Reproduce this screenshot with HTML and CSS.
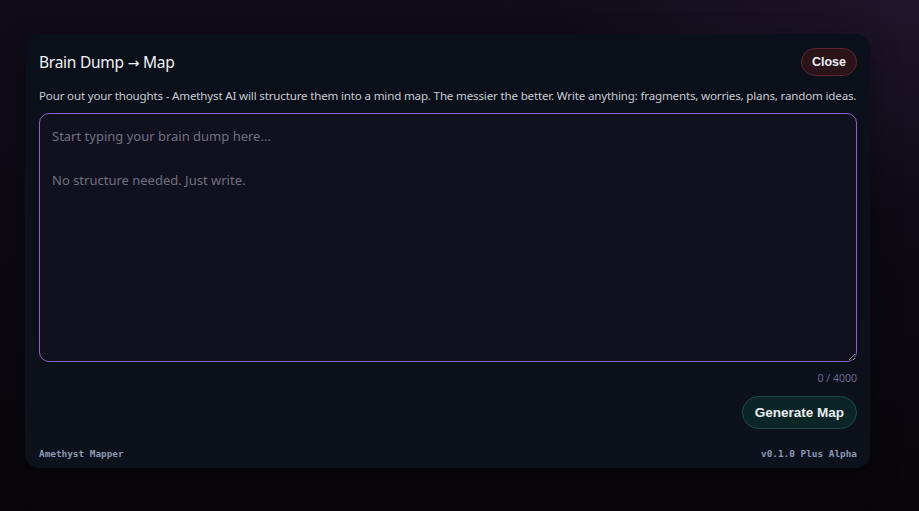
FILE: index.html
```html
<!DOCTYPE html>
<html lang="en">
<head>
<meta charset="utf-8">
<title>Brain Dump → Map</title>
<link rel="stylesheet" href="styles.css">
</head>
<body>
<div class="stage">
  <section class="card">
    <header class="card-head">
      <h1 class="title">Brain Dump <span class="arrow">→</span> Map</h1>
      <button class="btn btn-close">Close</button>
    </header>
    <p class="desc">Pour out your thoughts - Amethyst AI will structure them into a mind map. The messier the better. Write anything: fragments, worries, plans, random ideas.</p>
    <textarea class="dump" placeholder="Start typing your brain dump here...

No structure needed. Just write."></textarea>
    <div class="counter">0 / 4000</div>
    <div class="actions">
      <button class="btn btn-generate">Generate Map</button>
    </div>
    <footer class="card-foot">
      <span>Amethyst Mapper</span>
      <span>v0.1.0 Plus Alpha</span>
    </footer>
  </section>
</div>
</body>
</html>
```

FILE: styles.css
```css
* { box-sizing: border-box; }
html, body { margin: 0; height: 100%; }
body {
  background:
    radial-gradient(ellipse 55% 60% at 100% 0%, rgba(50, 32, 66, 0.45), transparent 70%),
    linear-gradient(180deg, #110c18 0%, #0c0911 60%, #08060b 100%);
  font-family: "Noto Sans", "Open Sans", sans-serif;
  color: #e6e7ee;
}
.stage {
  padding: 34px 50px 0 25px;
}
.card {
  width: 845px;
  height: 434px;
  background: linear-gradient(180deg, #0b0f19 0%, #0c111b 100%);
  border-radius: 14px;
  padding: 14px 13px 0 14px;
  display: flex;
  flex-direction: column;
  box-shadow: 0 10px 30px rgba(0,0,0,0.35);
}
.card-head {
  display: flex;
  align-items: center;
  justify-content: space-between;
  height: 28px;
}
.title {
  margin: 0;
  font-size: 15.5px;
  font-weight: 400;
  color: #f1f2f6;
  letter-spacing: -0.25px;
}
.arrow {
  font-family: "DejaVu Sans", sans-serif;
  font-size: 14px;
}
.btn {
  font-family: "Liberation Sans", Arial, sans-serif;
  font-weight: 700;
  color: #eceef2;
  border-radius: 999px;
  cursor: pointer;
}
.btn-close {
  height: 28px;
  padding: 0 10px;
  font-size: 12.5px;
  background: #2a1419;
  border: 1px solid #5c2530;
}
.desc {
  margin: 12px 0 0;
  font-size: 11.6px;
  line-height: 16px;
  color: #c9cbd3;
  letter-spacing: -0.18px;
  white-space: nowrap;
}
.dump {
  margin-top: 9px;
  height: 249px;
  width: 100%;
  resize: vertical;
  background: #11101f;
  border: 1px solid #8b63c4;
  border-radius: 10px;
  padding: 11px 12px;
  font-family: "Noto Sans", "Open Sans", sans-serif;
  font-size: 13px;
  line-height: 22px;
  color: #e6e7ee;
  outline: none;
}
.dump::placeholder {
  color: #6f7180;
}
.counter {
  margin-top: 10px;
  text-align: right;
  font-size: 10.5px;
  line-height: 13px;
  color: #6f688c;
}
.actions {
  display: flex;
  justify-content: flex-end;
  margin-top: 11px;
}
.btn-generate {
  height: 33px;
  padding: 0 12px;
  font-size: 13.5px;
  background: #0b2426;
  border: 1px solid #1d4d4a;
}
.card-foot {
  display: flex;
  justify-content: space-between;
  margin-top: 19px;
  font-family: "DejaVu Sans Mono", "Liberation Mono", monospace;
  font-weight: 700;
  font-size: 9.4px;
  color: #8c98b3;
}
```
